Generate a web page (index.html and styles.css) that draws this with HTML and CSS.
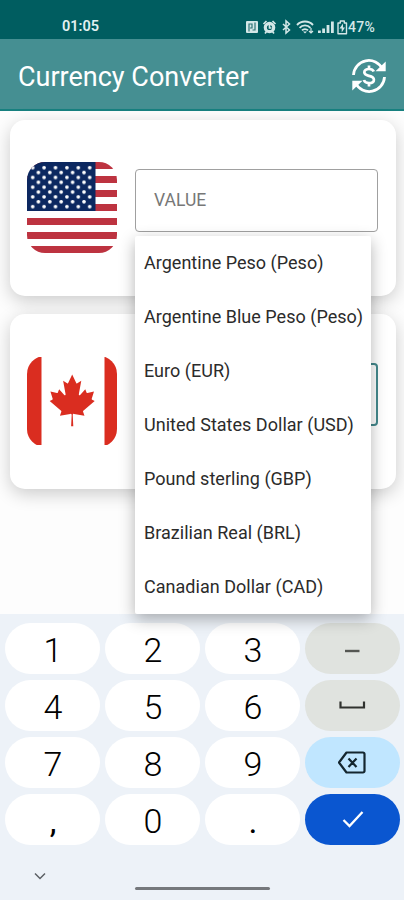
FILE: index.html
```html
<!DOCTYPE html>
<html lang="en">
<head>
  <meta charset="UTF-8">
  <meta name="viewport" content="width=device-width, initial-scale=1.0">
  <title>Currency Converter</title>
  <link rel="stylesheet" href="styles.css">
</head>
<body>
  <div class="status-bar">
    <span class="clock">01:05</span>
    <div class="status-icons">
      <svg width="103" height="16" viewBox="0 0 103 16">
        <!-- nfc -->
        <rect x="1" y="2" width="12" height="12" rx="1" fill="#d3e7e7"/>
        <path d="M4 12.500V5h3v4H5M10 3.500V11H7.500" fill="none" stroke="#2c7476" stroke-width="1.200"/>
        <!-- alarm -->
        <circle cx="24.500" cy="8.500" r="4.200" fill="none" stroke="#d3e7e7" stroke-width="3.200"/>
        <path d="M18.500 5l3-3M30.500 5l-3-3M20 14.500l1.500-2M29 14.500l-1.500-2M24.500 6v3h2" fill="none" stroke="#d3e7e7" stroke-width="1.700"/>
        <!-- bluetooth -->
        <path d="M38 5l6.500 6L41 14V2l3.500 3L38 11" fill="none" stroke="#d3e7e7" stroke-width="1.500"/>
        <!-- wifi -->
        <path d="M52 6a11 11 0 0 1 16 0M54.600 8.800a7.200 7.200 0 0 1 10.800 0M57 11.400a4.200 4.200 0 0 1 6 0" fill="none" stroke="#d3e7e7" stroke-width="1.900"/>
        <path d="M58 12.500h4l-2 2z" fill="#d3e7e7"/>
        <path d="M66 9v5M64 12l2 2 2-2" fill="none" stroke="#d3e7e7" stroke-width="1.200"/>
        <!-- signal -->
        <path d="M73 11.500h2.800V14H73zM77.200 9.500H80V14h-2.800zM81.600 6h2.800v8h-2.800zM86 2.500h2.800V14H86z" fill="#d3e7e7"/>
        <!-- battery -->
        <path d="M93 4h2.300V2h4v2h2.200v10.800H93z" fill="none" stroke="#d3e7e7" stroke-width="1.400" stroke-linejoin="round"/>
        <path d="M98 4.500l-3.500 5h2.200v4l3.300-5h-2z" fill="#d3e7e7"/>
      </svg>
      <span class="battery-level">47%</span>
    </div>
  </div>

  <header class="app-bar">
    <h1>Currency Converter</h1>
    <svg width="36" height="36" viewBox="0 0 36 36">
      <path d="M2.500 17A15.300 15.300 0 0 1 31.500 11M33.500 19A15.300 15.300 0 0 1 4.500 25" fill="none" stroke="#fff" stroke-width="2.800"/>
      <path d="M34.700 3.500v9.800H24.500zM1.300 32.500v-9.800h10.200z" fill="#fff"/>
      <path d="M22.800 13.600C22 11.700 20.300 11 18 11c-2.700 0-4.700 1.200-4.700 3.300 0 2.500 2.300 3 4.700 3.600 2.500.6 4.900 1.300 4.900 3.800 0 2.200-2.200 3.400-4.900 3.400-2.600 0-4.500-1-5.100-3.100M18 7.500V11M18 25v3.500" fill="none" stroke="#fff" stroke-width="2.700"/>
    </svg>
  </header>

  <main class="content">
    <div class="card">
      <svg class="flag" viewBox="0 0 90 91">
        <defs>
          <clipPath id="flag-shape"><rect width="90" height="91" rx="18"/></clipPath>
          <pattern id="stars" x="0" y="0" width="11.400" height="9.740" patternUnits="userSpaceOnUse">
            <circle cx="5.700" cy="5.700" r="1.800" fill="#fff"/>
            <circle cx="0" cy="0.830" r="1.800" fill="#fff"/>
            <circle cx="11.400" cy="0.830" r="1.800" fill="#fff"/>
            <circle cx="0" cy="10.570" r="1.800" fill="#fff"/>
            <circle cx="11.400" cy="10.570" r="1.800" fill="#fff"/>
          </pattern>
        </defs>
        <g clip-path="url(#flag-shape)">
          <rect width="90" height="91" fill="#fff"/>
          <path d="M0 3.500h90M0 17.500h90M0 31.500h90M0 45.500h90M0 59.500h90M0 73.500h90M0 87.500h90" stroke="#bd3340" stroke-width="7"/>
          <rect width="68.500" height="49" fill="#0c2860"/>
          <rect x="3" y="3.500" width="62.500" height="43.500" fill="url(#stars)"/>
        </g>
      </svg>
      <div class="field">VALUE</div>
    </div>

    <div class="card">
      <svg class="flag" viewBox="0 0 90 91">
        <g clip-path="url(#flag-shape)">
          <path d="M0 1h14.500v88H0zM77.500 1H90v88H77.500z" fill="#da2d20"/>
        </g>
        <path transform="translate(45.200 44.200) scale(.0121 .0128)" fill="#da2d20" d="M-90 2030l45-863a95 95 0 0 0-111-98l-859 151 116-320a65 65 0 0 0-20-73l-941-762 212-99a65 65 0 0 0 34-79l-186-572 542 115a65 65 0 0 0 73-38l105-247 423 454a65 65 0 0 0 111-57l-204-1052 327 189a65 65 0 0 0 91-27l332-652 332 652a65 65 0 0 0 91 27l327-189-204 1052a65 65 0 0 0 111 57l423-454 105 247a65 65 0 0 0 73 38l542-115-186 572a65 65 0 0 0 34 79l212 99-941 762a65 65 0 0 0-20 73l116 320-859-151a95 95 0 0 0-111 98l45 863z"/>
      </svg>
      <div class="field field-active"></div>
    </div>

    <!-- Currency dropdown, opens over both cards -->
    <ul class="menu">
      <li>Argentine Peso (Peso)</li>
      <li>Argentine Blue Peso (Peso)</li>
      <li>Euro (EUR)</li>
      <li>United States Dollar (USD)</li>
      <li>Pound sterling (GBP)</li>
      <li>Brazilian Real (BRL)</li>
      <li>Canadian Dollar (CAD)</li>
    </ul>
  </main>

  <div class="keyboard">
    <div class="keys">
      <button class="key">1</button>
      <button class="key">2</button>
      <button class="key">3</button>
      <button class="key key-gray">
        <svg width="30" height="20" viewBox="0 0 30 20"><path d="M7 13h14.500" stroke="#555753" stroke-width="2.400"/></svg>
      </button>
      <button class="key">4</button>
      <button class="key">5</button>
      <button class="key">6</button>
      <button class="key key-gray">
        <svg width="30" height="20" viewBox="0 0 30 20"><path d="M2.500 6.500v6h23.500v-6" fill="none" stroke="#30322f" stroke-width="2.200"/></svg>
      </button>
      <button class="key">7</button>
      <button class="key">8</button>
      <button class="key">9</button>
      <button class="key key-light">
        <svg width="30" height="24" viewBox="0 0 30 24"><path d="M8.500 2.500H25a1.500 1.500 0 0 1 1.500 1.500v17a1.500 1.500 0 0 1-1.500 1.500H8.500L1 12.500zM10.500 8.500l8 8.500M18.500 8.500l-8 8.500" fill="none" stroke="#14262f" stroke-width="2.200" stroke-linejoin="round"/></svg>
      </button>
      <button class="key key-mark">,</button>
      <button class="key">0</button>
      <button class="key key-mark">.</button>
      <button class="key key-blue">
        <svg width="24" height="20" viewBox="0 0 24 20"><path d="M2.500 11l6 6L21.500 3" fill="none" stroke="#fff" stroke-width="2.300"/></svg>
      </button>
    </div>
    <div class="nav-bar">
      <svg width="14" height="10" viewBox="0 0 14 10"><path d="M2 1.500l5 5 5-5" fill="none" stroke="#5c6064" stroke-width="1.500"/></svg>
      <span class="home-line"></span>
    </div>
  </div>
</body>
</html>
```

FILE: styles.css
```css
* {
  box-sizing: border-box;
}
body {
  font-family: Roboto, sans-serif;
  background-color: #fdfdfd;
  margin: 0;
  height: 900px;
  display: flex;
  flex-direction: column;
  overflow: hidden;
}
.status-bar {
  height: 39px;
  padding: 14px 29px 0 62px;
  background-color: #005d60;
  color: #e3f1f1;
  display: flex;
  justify-content: space-between;
  align-items: center;
}
.clock {
  font-size: 14.5px;
  font-weight: 600;
}
.status-icons {
  display: flex;
  align-items: center;
}
.battery-level {
  font-size: 14px;
  font-weight: 500;
  letter-spacing: 0.3px;
  color: #d3e7e7;
}

.app-bar {
  height: 72px;
  padding: 0 17px 0 18px;
  background-color: #458f92;
  border-bottom: 2px solid #17807f;
  display: flex;
  justify-content: space-between;
  align-items: center;
  color: white;
}
.app-bar h1 {
  margin: 0;
  padding-top: 5px;
  font-size: 27px;
  font-weight: 400;
}
.app-bar svg {
  margin-top: 3px;
}

.content {
  position: relative;
  height: 503px;
  padding: 9px 8px 0 10px;
  display: flex;
  flex-direction: column;
  gap: 18px;
}
.card {
  height: 175.5px;
  padding: 42px 18px 0 17px;
  background-color: white;
  border-radius: 15px;
  box-shadow: 0 5px 18px rgba(0, 0, 0, 0.2);
  display: flex;
  align-items: flex-start;
  gap: 18px;
}
.flag {
  width: 90px;
  height: 91px;
  flex-shrink: 0;
}
.field {
  flex-grow: 1;
  height: 63px;
  margin-top: 7px;
  padding-left: 18px;
  border: 1px solid #a0a0a0;
  border-radius: 4px;
  line-height: 61px;
  font-size: 17.5px;
  color: #777;
}
.field-active {
  border: 2px solid #43888c;
}
.menu {
  position: absolute;
  top: 125px;
  left: 135px;
  width: 236px;
  margin: 0;
  padding: 0 0 0 9px;
  list-style: none;
  background-color: white;
  border-radius: 2px;
  box-shadow: 0 5px 16px rgba(0, 0, 0, 0.3);
  z-index: 2;
}
.menu li {
  height: 54px;
  line-height: 54px;
  font-size: 18px;
  letter-spacing: 0.02px;
  color: #2b2b2b;
  white-space: nowrap;
}

.keyboard {
  height: 286px;
  padding: 9px 4px 0 5px;
  background-color: #edf2f8;
}
.keys {
  display: grid;
  grid-template-columns: repeat(4, 1fr);
  grid-auto-rows: 50.5px;
  gap: 6.5px 5px;
}
.key {
  padding: 4px 0 0 1px;
  border: none;
  border-radius: 26px;
  background-color: white;
  color: #000;
  font-family: Roboto, sans-serif;
  font-size: 34px;
  font-weight: 300;
  display: flex;
  justify-content: center;
  align-items: center;
}
.key-mark {
  font-weight: 400;
}
.key-gray, .key-light, .key-blue {
  padding-top: 0;
}
.key-gray {
  background-color: #e0e3df;
}
.key-light {
  background-color: #c0e6ff;
}
.key-blue {
  background-color: #0a56d0;
}
.nav-bar {
  padding: 27px 0 0 28px;
  display: flex;
  align-items: flex-start;
}
.home-line {
  width: 135px;
  height: 3px;
  margin: 15px 0 0 88px;
  border-radius: 2px;
  background-color: #75787c;
}
```
